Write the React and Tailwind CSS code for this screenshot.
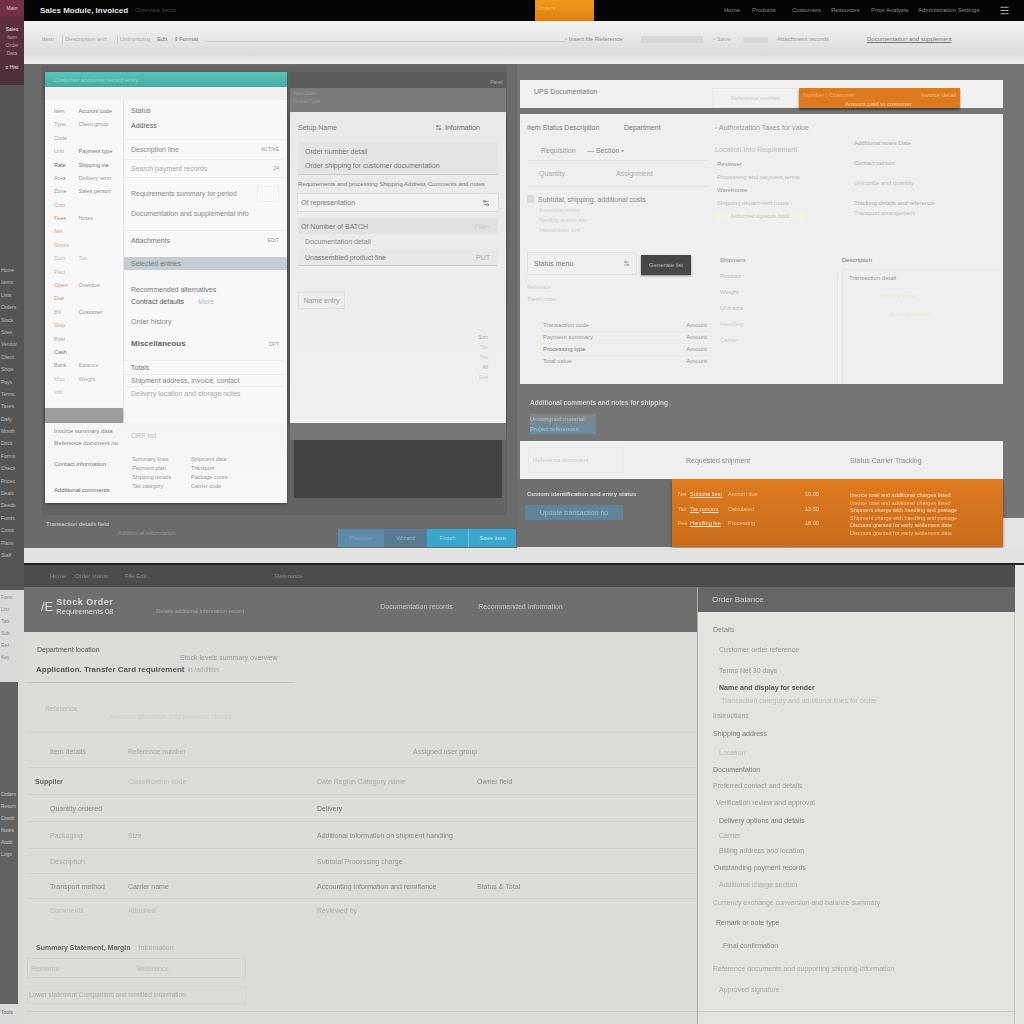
import React from "react";
import { Settings2, Menu } from "lucide-react";

const sideRows = [
  "Home", "Items", "Lists", "Orders", "Stock", "Sites", "Vendor", "Client",
  "Ships", "Pays", "Terms", "Taxes", "Daily", "Month", "Docs", "Forms",
  "Check", "Prices", "Deals", "Deeds", "Funds", "Costs", "Plans", "Staff",
];

const sideBottomRows = ["Orders", "Return", "Credit", "Notes", "Audit", "Logs"];

const cardListRows = [
  ["Item", "text-[#8b8b8b]", "Account code", "text-[#777]"],
  ["Type", "text-[#a5a5a5]", "Client group", "text-[#999]"],
  ["Code", "text-[#a5a5a5]", "", ""],
  ["Unit", "text-[#a5a5a5]", "Payment type", "text-[#777]"],
  ["Rate", "text-[#666]", "Shipping via", "text-[#777]"],
  ["Area", "text-[#999]", "Delivery term", "text-[#999]"],
  ["Zone", "text-[#999]", "Sales person", "text-[#888]"],
  ["Cost", "text-[#c9a78d]", "", ""],
  ["Fees", "text-[#c98d6d]", "Notes", "text-[#999]"],
  ["Net", "text-[#c9a78d]", "", ""],
  ["Gross", "text-[#c9a78d]", "", ""],
  ["Sum", "text-[#bbb]", "Tax", "text-[#bbb]"],
  ["Paid", "text-[#bbb]", "", ""],
  ["Open", "text-[#c98d6d]", "Overdue", "text-[#999]"],
  ["Due", "text-[#c98d6d]", "", ""],
  ["Bill", "text-[#b5b5b5]", "Customer", "text-[#888]"],
  ["Ship", "text-[#c9a78d]", "", ""],
  ["Post", "text-[#c98d6d]", "", ""],
  ["Cash", "text-[#777]", "", ""],
  ["Bank", "text-[#999]", "Balance", "text-[#aaa]"],
  ["Misc", "text-[#bbb]", "Weight", "text-[#aaa]"],
  ["Info", "text-[#bbb]", "", ""],
];

const cardMainRows = [
  { cls: "h-[20px]", text: "Status", tone: "text-[#777]" },
  { cls: "h-[10px]", text: "Address", tone: "text-[#555]" },
  { cls: "mt-[9px] h-[20px] border-t border-[#eee]", text: "Description line", tone: "text-[#888]", tag: "ACTIVE" },
  { cls: "h-[18px] border-t border-[#eee]", text: "Search payment records", tone: "text-[#aaa]", tag: "24" },
  { cls: "h-[32px] border-t border-[#eee]", text: "Requirements summary for period", tone: "text-[#888]", box: true },
  { cls: "h-[8px]", text: "Documentation and supplemental info", tone: "text-[#888]" },
  { cls: "mt-[13px] h-[20px] border-t border-[#eee]", text: "Attachments", tone: "text-[#777]", tag: "EDIT" },
  { cls: "mt-[7px] h-[13px] bg-[#c2ced3] -mr-[2px]", text: "Selected entries", tone: "text-[#777]" },
  { cls: "mt-[12px] h-[14px]", text: "Recommended alternatives", tone: "text-[#777]" },
  { cls: "h-[10px]", text: "Contract defaults", tone: "text-[#555]", link: "More" },
  { cls: "mt-[8px] h-[14px]", text: "Order history", tone: "text-[#888]" },
  { cls: "mt-[8px] h-[16px]", text: "Miscellaneous", tone: "text-[#666] text-[8px] font-bold", tag: "OPT" },
  { cls: "mt-[8px] h-[14px] border-t border-[#eee]", text: "Totals", tone: "text-[#777]" },
  { cls: "h-[12px] border-t border-[#eee]", text: "Shipment address, invoice, contact", tone: "text-[#888]" },
  { cls: "h-[14px] border-t border-[#eee]", text: "Delivery location and storage notes", tone: "text-[#aaa]" },
];

const miniColumn = [
  { head: "Summary lines", head2: "Payment plan", rows: ["Shipping details", "Tax category"] },
  { head: "Shipment data", head2: "Transport", rows: ["Package count", "Carrier code"] },
];

const orangeRows = [
  ["Net", "Subtotal item", "Amount due", "10.00", "Invoice total and additional charges listed"],
  ["Tax", "Tax percent", "Calculated", "12.50", "Shipment charge with handling and postage"],
  ["Fee", "Handling fee", "Processing", "18.00", "Discount granted for early settlement date"],
];

const tableRows = [
  { cls: "h-[31px] mt-[3px]", a: "Item details", aTone: "text-[#999]", b: "Reference number", bTone: "text-[#aaa]", c: "Assigned user group", cTone: "text-[#999] pl-[96px]" },
  { cls: "h-[27px] border-t border-[#d2d2ce]", a: "Supplier", aTone: "text-[#666] font-bold -ml-[15px]", b: "Classification code", bTone: "text-[#bbb]", c: "Date      Region      Category name", cTone: "text-[#aaa]", d: "Owner field" },
  { cls: "h-[27px] border-t border-[#d2d2ce]", a: "Quantity ordered", aTone: "text-[#888]", b: "", bTone: "", c: "Delivery", cTone: "text-[#777]" },
  { cls: "h-[27px] border-t border-[#d2d2ce]", a: "Packaging", aTone: "text-[#aaa]", b: "Size", bTone: "text-[#aaa]", c: "Additional information on shipment handling", cTone: "text-[#888]" },
  { cls: "h-[25px] border-t border-[#d2d2ce]", a: "Description", aTone: "text-[#aaa]", b: "", bTone: "", c: "Subtotal      Processing charge", cTone: "text-[#999]" },
  { cls: "h-[25px] border-t border-[#d2d2ce]", a: "Transport method", aTone: "text-[#888]", b: "Carrier name", bTone: "text-[#888]", c: "Accounting information and remittance", cTone: "text-[#888]", d: "Status & Total" },
  { cls: "h-[24px] border-t border-[#d2d2ce]", a: "Comments", aTone: "text-[#bbb]", b: "Attached", bTone: "text-[#bbb]", c: "Reviewed by", cTone: "text-[#aaa]" },
];

const sideOrderRows = [
  { cls: "h-[19px] pl-[15px]", text: "Details", tone: "text-[#888]" },
  { cls: "h-[21px] pl-[21px]", text: "Customer order reference", tone: "text-[#999]" },
  { cls: "h-[21px] pl-[21px]", text: "Terms          Net 30 days", tone: "text-[#999]" },
  { cls: "h-[13px] pl-[21px]", text: "Name and display for sender", tone: "text-[#555] font-bold" },
  { cls: "h-[12px] pl-[23px]", text: "Transaction category and additional lines for order", tone: "text-[#bbb]" },
  { cls: "h-[18px] pl-[15px]", text: "Instructions", tone: "text-[#999]" },
  { cls: "h-[19px] pl-[15px]", text: "Shipping address", tone: "text-[#777]" },
  { cls: "h-[18px] pl-[21px]", text: "Location", tone: "text-[#bbb]" },
  { cls: "h-[16px] pl-[15px]", text: "Documentation", tone: "text-[#777]" },
  { cls: "h-[16px] pl-[15px]", text: "Preferred contact and details", tone: "text-[#999]" },
  { cls: "h-[19px] pl-[18px]", text: "Verification review and approval", tone: "text-[#999]" },
  { cls: "h-[16px] pl-[21px]", text: "Delivery options and details", tone: "text-[#777]" },
  { cls: "h-[14px] pl-[21px]", text: "Carrier", tone: "text-[#aaa]" },
  { cls: "h-[17px] pl-[21px]", text: "Billing address and location", tone: "text-[#999]" },
  { cls: "h-[17px] pl-[16px]", text: "Outstanding payment records", tone: "text-[#888]" },
  { cls: "h-[17px] pl-[21px]", text: "Additional charge section", tone: "text-[#aaa]" },
  { cls: "h-[19px] pl-[15px]", text: "Currency exchange conversion and balance summary", tone: "text-[#aaa]" },
  { cls: "h-[21px] pl-[18px]", text: "Remark or note type", tone: "text-[#777]" },
  { cls: "h-[24px] pl-[25px]", text: "Final confirmation", tone: "text-[#888]" },
  { cls: "h-[23px] pl-[15px]", text: "Reference documents and supporting shipping information", tone: "text-[#aaa]" },
  { cls: "h-[18px] pl-[21px]", text: "Approved signature", tone: "text-[#aaa]" },
];

function T({ className = "", children }) {
  return <span className={`whitespace-nowrap ${className}`}>{children}</span>;
}

function Sidebar() {
  return (
    <div className="flex w-[24px] shrink-0 flex-col overflow-hidden bg-[#dadada] text-[5px] leading-none text-[#c5c5c5]">
      <div className="flex h-[17px] items-center justify-center bg-[#703047] text-[#e5c9d2]">
        <T>Main</T>
      </div>
      <div className="flex h-[68px] flex-col items-center gap-[3px] bg-[linear-gradient(#5d2f40,#4b3038)] pt-[10px]">
        <T className="text-[#e8e8e8]">Sales</T>
        <T className="text-[#c99aa8]">Item</T>
        <T className="text-[#c99aa8]">Order</T>
        <T className="text-[#c99aa8]">Data</T>
        <T className="mt-[6px] text-[#eee]">≡ Hist</T>
      </div>
      <div className="h-[183px] bg-[#555]" />
      <div className="flex h-[322px] flex-col gap-[7.4px] bg-[#555] pl-[1px]">
        {sideRows.map((row) => (
          <T key={row} className="text-[#bdbdbd]">{row}</T>
        ))}
      </div>
      <div className="flex h-[92px] flex-col gap-[7px] bg-[#dadada] pt-[5px] pl-[1px] text-[#888]">
        <T>Form</T><T>List</T><T>Tab</T><T>Sub</T><T>Ref</T><T>Key</T>
      </div>
      <div className="flex h-[322px] w-[18px] flex-col gap-[7px] bg-[#626262] pt-[110px] pl-[1px]">
        {sideBottomRows.map((row) => (
          <T key={row}>{row}</T>
        ))}
      </div>
      <div className="flex-1 pt-[6px] pl-[1px] text-[#666]">Tools</div>
    </div>
  );
}

function TopBar() {
  return (
    <div className="flex h-[21px] shrink-0 items-center bg-[#050505] text-[6px] text-[#999]">
      <T className="ml-[16px] w-[95px] text-[8px] font-bold text-[#e6e6e6]">Sales Module, Invoiced</T>
      <T className="text-[#444]">Overview items</T>
      <div className="ml-[359px] h-full w-[59px] bg-[linear-gradient(#f09a1e,#e07f10)] pt-[4px] pl-[2px] text-[#f5b75c]">
        <T>Orders</T>
      </div>
      <div className="ml-[130px] flex gap-[12px] text-[#8a8a8a]">
        <T className="w-[16px]">Home</T>
        <T className="w-[28px]">Products</T>
        <T className="w-[27px]">Customers</T>
        <T className="w-[28px]">Resources</T>
        <T className="w-[35px]">Price Analysis</T>
        <T className="w-[65px]">Administration Settings</T>
      </div>
      <Menu size={11} className="ml-[16px] text-[#bbb]" />
    </div>
  );
}

function Toolbar() {
  return (
    <div className="flex h-[43px] shrink-0 items-center bg-[linear-gradient(#f2f2f2,#e6e6e6_45%,#dcdcdc_75%,#ededed)] pb-[6px] text-[6px] text-[#aaa]">
      <T className="ml-[18px] w-[20px] text-[#999]">Item</T>
      <T className="w-[55px] border-l border-[#ccc] pl-[2px]">Description text</T>
      <T className="w-[40px] border-l border-[#ccc] pl-[2px]">Unit pricing</T>
      <T className="w-[18px] text-[#777]">Edit</T>
      <T className="w-[30px] text-[#777]">‖ Format</T>
      <div className="mt-[3px] h-[1px] w-[360px] bg-[#cfcfcf]" />
      <T className="w-[76px] text-[#888]">▫ Insert file  Reference</T>
      <div className="mr-[10px] h-[7px] w-[62px] bg-[#d8d8d8]" />
      <T className="w-[30px]">▫ Save</T>
      <div className="mr-[9px] h-[6px] w-[25px] bg-[#d8d8d8]" />
      <T className="w-[90px] text-[#999]">Attachment records</T>
      <T className="text-[#777] underline">Documentation and supplement</T>
    </div>
  );
}

function ListCard() {
  return (
    <div className="flex h-[431px] w-[242px] flex-col bg-[#f8f8f8] shadow-[0_1px_3px_rgba(0,0,0,0.4)]">
      <div className="h-[15px] shrink-0 bg-[linear-gradient(#5ec2b8,#43aba6)] pt-[4px] pl-[8px] text-[6px] text-[#8fd8d0]">
        <T>Customer accounts record entry</T>
      </div>
      <div className="h-[13px] shrink-0 bg-[#f0f0f0]" />
      <div className="flex h-[323px] shrink-0">
        <div className="flex w-[79px] shrink-0 flex-col border-r border-[#e6e6e6]">
          <div className="flex flex-1 flex-col overflow-hidden pt-[5px] pr-[5px] pl-[9px] text-[5.5px] leading-none">
            {cardListRows.map(([left, leftTone, right, rightTone], i) => (
              <div key={left + i} className="flex h-[13.4px] shrink-0 items-center">
                <T className={`w-[25px] ${leftTone}`}>{left}</T>
                <T className={`w-[40px] ${rightTone}`}>{right}</T>
              </div>
            ))}
          </div>
          <div className="h-[15px] shrink-0 bg-[#9d9d9d] shadow-[0_1px_2px_rgba(0,0,0,0.3)]" />
        </div>
        <div className="min-w-0 flex-1 pr-[2px] text-[7px] leading-none">
          {cardMainRows.map((row) => (
            <div key={row.text} className={`flex items-center justify-between pr-[6px] pl-[7px] ${row.cls}`}>
              <T className={row.tone}>{row.text}</T>
              {row.link && <T className="mr-auto ml-[14px] text-[#a8b8d8]">{row.link}</T>}
              {row.tag && <T className="text-[5px] text-[#999]">{row.tag}</T>}
              {row.box && <div className="h-[16px] w-[22px] border border-[#eee]" />}
            </div>
          ))}
        </div>
      </div>
      <div className="flex flex-1 bg-[linear-gradient(#f4f4f4,#f8f8f8)]">
        <div className="flex w-[79px] shrink-0 flex-col pl-[9px] text-[6px] leading-none text-[#888]">
          <T className="mt-[5px]">Invoice summary data</T>
          <T className="mt-[6px]">Reference document no</T>
          <T className="mt-[15px] text-[#777]">Contact information</T>
          <T className="mt-[20px] text-[#666]">Additional comments</T>
        </div>
        <div className="flex flex-col">
          <T className="mt-[9px] ml-[7px] text-[7px] leading-none text-[#bbb]">CRP list</T>
        </div>
        <div className="-ml-[28px] flex flex-1 gap-[20px] pt-[32px] pl-[4px] text-[5.5px] leading-[9px] text-[#999]">
          {miniColumn.map((col) => (
            <div key={col.head} className="flex flex-col">
              <T>{col.head}</T>
              <T>{col.head2}</T>
              {col.rows.map((r) => (
                <T key={r}>{r}</T>
              ))}
            </div>
          ))}
        </div>
      </div>
    </div>
  );
}

function DetailCard() {
  return (
    <div className="flex w-[216px] flex-col">
      <div className="flex h-[16px] shrink-0 items-start justify-end bg-[#5b5b5b] pt-[8px] pr-[3px] text-[5px] leading-none text-[#aaa]">
        <T>Panel</T>
      </div>
      <div className="flex h-[24px] shrink-0 flex-col gap-[3px] bg-[#7b7b7b] pt-[3px] pl-[4px] text-[5px] leading-none text-[#999]">
        <T>Item    Code</T>
        <T>Group   Type</T>
      </div>
      <div className="flex h-[311px] shrink-0 flex-col bg-[linear-gradient(#e9e9e9,#f0f0f0)] px-[8px] text-[7px] leading-none shadow-[0_2px_3px_rgba(0,0,0,0.4)]">
        <div className="flex h-[30px] shrink-0 items-center justify-between pr-[18px]">
          <T className="text-[#777]">Setup Name</T>
          <span className="flex items-center gap-[3px]">
            <Settings2 size={7} className="text-[#666]" />
            <T className="text-[#666]">Information</T>
          </span>
        </div>
        <div className="flex h-[32px] shrink-0 flex-col justify-center gap-[7px] bg-[#e4e4e4] pl-[7px] shadow-[0_1px_0_#ccc]">
          <T className="text-[#777]">Order number detail</T>
          <T className="text-[#777]">Order shipping for customer documentation</T>
        </div>
        <div className="flex h-[20px] shrink-0 items-center">
          <T className="text-[6px] text-[#777]">Requirements and processing  Shipping  Address  Comments and notes</T>
        </div>
        <div className="flex h-[17px] shrink-0 items-center justify-between bg-[#f2f2f2] pr-[8px] pl-[3px] shadow-[0_0_0_1px_#ddd]">
          <T className="text-[#777]">Of representation</T>
          <Settings2 size={8} className="text-[#666]" />
        </div>
        <div className="mt-[7px] flex h-[16px] shrink-0 items-center justify-between bg-[#e2e2e2] pr-[8px] pl-[3px]">
          <T className="text-[#777]">Of  Number of BATCH</T>
          <T className="text-[#ccc]">Filter</T>
        </div>
        <div className="flex h-[15px] shrink-0 items-center pl-[7px] shadow-[0_1px_0_#ccc]">
          <T className="text-[#888]">Documentation  detail</T>
        </div>
        <div className="flex h-[16px] shrink-0 items-center justify-between bg-[#e8e8e8] pr-[8px] pl-[7px] shadow-[0_1px_0_#ccc]">
          <T className="text-[#777]">Unassembled product line</T>
          <T className="text-[#aaa]">PUT</T>
        </div>
        <div className="mt-[27px] flex h-[17px] w-[47px] shrink-0 items-center justify-center border border-[#e0e0e0]">
          <T className="text-[#999]">Name entry</T>
        </div>
        <div className="mt-[26px] ml-auto flex flex-col items-end gap-[5px] pr-[10px] text-[5px] text-[#ccc]">
          <T className="text-[#aaa]">Sum</T>
          <T>Tax</T>
          <T>Net</T>
          <T className="text-[#aaa]">All</T>
          <T>End</T>
        </div>
      </div>
      <div className="h-[17px] shrink-0 bg-[#777]" />
      <div className="mx-[4px] h-[58px] shrink-0 bg-[#424242]" />
    </div>
  );
}

function LeftPanel() {
  return (
    <div className="flex w-[493px] shrink-0 flex-col bg-[#6b6b6b] pl-[18px]">
      <div className="mt-[2px] flex h-[449px] w-[465px] gap-[3px] bg-[#636363] pt-[6px] pl-[3px]">
        <ListCard />
        <DetailCard />
      </div>
      <div className="flex h-[33px] items-start pt-[6px] pl-[4px]">
        <div className="flex w-[292px] flex-col gap-[3px] text-[6px] leading-none">
          <T className="text-[#d5d5d5]">Transaction details field</T>
          <T className="ml-[72px] text-[#999]">Additional  information</T>
        </div>
        <div className="mt-[8px] flex h-[18px] text-[6px] leading-[18px]">
          <div className="w-[46px] bg-[#5f8bab] text-center text-[#7ca6c5]">Previous</div>
          <div className="w-[43px] bg-[#587a93] text-center text-[#8fb6d0]">Wizard</div>
          <div className="w-[41px] bg-[#3aa5cd] text-center text-[#a0dcf0]">Finish</div>
          <div className="w-[48px] border-l border-[#6cc2e0] bg-[#3aa5cd] text-center text-[#c0ecf8]">Save item</div>
        </div>
      </div>
    </div>
  );
}

function RightPanel() {
  return (
    <div className="flex min-w-0 flex-1 flex-col bg-[linear-gradient(#757575_454px,#e4e4e4_454px)] pt-[16px] pr-[21px] pl-[3px] text-[7px] leading-none">
      <div className="flex h-[28px] shrink-0 bg-[#f1f1f1]">
        <T className="mt-[8px] ml-[14px] w-[178px] text-[#777]">UPS Documentation</T>
        <div className="mt-[8px] flex h-[20px] w-[87px] items-center justify-center border border-[#e8e8e8]">
          <T className="text-[6px] text-[#ccc]">Reference number</T>
        </div>
        <div className="mt-[8px] flex h-[20px] w-[161px] justify-between bg-[#dd7a1f] px-[4px] pt-[4px] text-[6px] shadow-[0_2px_2px_rgba(0,0,0,0.45)]">
          <div className="flex flex-col gap-[3px]">
            <T className="text-[#f1b27a]">Number  |  Customer</T>
            <T className="ml-[42px] text-[#f8d2ad]">Amount paid to customer</T>
          </div>
          <T className="text-[#f3bf8d]">Invoice detail</T>
        </div>
      </div>

      <div className="mt-[6px] flex h-[270px] shrink-0 flex-col overflow-hidden bg-[#efefef]">
        <div className="flex h-[135px] shrink-0">
          <div className="flex w-[194px] shrink-0 flex-col px-[7px]">
            <div className="flex h-[26px] items-center">
              <T className="w-[97px] text-[#777]">Item Status Description</T>
              <T className="text-[#777]">Department</T>
            </div>
            <div className="flex h-[21px] items-center border-b border-[#e2e2e2] pl-[14px] text-[#999]">
              <T className="w-[46px]">Requisition</T>
              <T className="text-[#888]">—  Section  ▪</T>
            </div>
            <div className="flex h-[26px] items-center border-b border-[#e2e2e2] pl-[12px] text-[#aaa]">
              <T className="w-[77px]">Quantity</T>
              <T>Assignment</T>
            </div>
            <div className="flex h-[16px] items-end">
              <span className="mr-[4px] h-[8px] w-[7px] bg-[#ddd]" />
              <T className="text-[#888]">Subtotal, shipping, additional costs</T>
            </div>
            <div className="mt-[5px] flex flex-col gap-[5px] pl-[12px] text-[5px] text-[#d0d0d0]">
              <T>Processing entries</T>
              <T>Handling amount due</T>
              <T>Internal notes sent</T>
            </div>
          </div>
          <div className="flex w-[140px] shrink-0 flex-col pl-[1px]">
            <div className="flex h-[26px] items-center">
              <T className="text-[#999]">▫ Authorization   Taxes for value</T>
            </div>
            <div className="flex h-[18px] items-center text-[#bbb]">
              <T>Location  Info  Requirement</T>
            </div>
            <div className="flex flex-col gap-[7px] pt-[3px] pl-[2px] text-[6px] text-[#bbb]">
              <T className="text-[#999]">Reviewer</T>
              <T>Processing and payment terms</T>
              <T className="text-[#999]">Warehouse</T>
              <T>Shipping department notes</T>
            </div>
            <div className="mt-[6px] w-[90px] bg-[#f3f2e6] py-[2px] text-center text-[5px] text-[#c5c5b0]">
              <T>Authorized signature block</T>
            </div>
          </div>
          <div className="flex flex-1 flex-col text-[6px] text-[#bbb]">
            <div className="h-[26px]" />
            <T className="text-[#aaa]">Additional notes       Date</T>
            <T className="mt-[14px] text-[#aaa]">Contact person</T>
            <T className="mt-[14px]">Unit price and quantity</T>
            <T className="mt-[14px] text-[#aaa]">Tracking details and reference</T>
            <T className="mt-[4px]">Transport arrangement</T>
          </div>
        </div>

        <div className="flex h-[135px] shrink-0 pr-[4px]">
          <div className="flex w-[194px] shrink-0 flex-col px-[7px]">
            <div className="flex h-[26px] shrink-0 items-end">
              <div className="flex h-[23px] w-[110px] items-center justify-between border border-[#e0e0e0] px-[6px]">
                <T className="text-[#777]">Status menu</T>
                <Settings2 size={7} className="text-[#888]" />
              </div>
              <div className="ml-[4px] flex h-[20px] w-[50px] items-center justify-center bg-[#474747] shadow-[0_1px_2px_rgba(0,0,0,0.4)]">
                <T className="text-[6px] text-[#bbb]">Generate list</T>
              </div>
            </div>
            <div className="mt-[10px] flex flex-col gap-[7px] text-[5px] text-[#ccc]">
              <T>Reference</T>
              <T>Transit notes</T>
            </div>
            <div className="mt-[20px] flex flex-col gap-[2px] pl-[16px] text-[6px] text-[#999]">
              {["Transaction code", "Payment summary", "Processing type", "Total value"].map((t, i) => (
                <div key={t} className="flex justify-between border-b border-[#e8e8e8] pb-[3px] last:border-0">
                  <T className={i === 2 ? "text-[#777]" : ""}>{t}</T>
                  <T>Amount</T>
                </div>
              ))}
            </div>
          </div>
          <div className="flex w-[124px] shrink-0 flex-col pt-[8px] pl-[6px] text-[6px] text-[#bbb]">
            <T className="text-[#888]">Shipment</T>
            <div className="mt-[10px] flex flex-1 flex-col gap-[10px] border-r border-[#e4e4e4]">
              <T>Product</T>
              <T>Weight</T>
              <T>Unit size</T>
              <T className="text-[#ccc]">Handling</T>
              <T className="text-[#ccc]">Carrier</T>
            </div>
          </div>
          <div className="ml-[4px] flex flex-1 flex-col pt-[8px] text-[6px] text-[#bbb]">
            <T className="text-[#777]">Description</T>
            <div className="mt-[6px] flex flex-1 flex-col gap-[12px] border-t border-l border-[#e6e6e6] pt-[5px] pl-[6px]">
              <T className="text-[#999]">Transaction detail</T>
              <T className="ml-[30px] text-[#e6e6cc]">Balance sheet</T>
              <T className="ml-[40px] text-[#e6e6cc]">Account review</T>
            </div>
          </div>
        </div>
      </div>

      <div className="flex h-[57px] shrink-0 flex-col pt-[16px] pl-[10px]">
        <T className="text-[6.5px] font-bold text-[#d0d0d0]">Additional comments and notes for shipping</T>
        <div className="mt-[7px] w-[66px] text-[6px] text-[#a8c4d4]">
          <div className="flex h-[10px] items-center bg-[#7f8588]"><T>Unassigned material</T></div>
          <div className="flex h-[10px] items-center bg-[#6e8b9d]"><T>Project references</T></div>
        </div>
      </div>

      <div className="flex h-[38px] shrink-0 items-center bg-[#efefef]">
        <div className="ml-[8px] flex h-[26px] w-[96px] items-center border border-[#e6e6e6] pl-[4px] text-[6px] text-[#ccc]">
          <T>Reference document</T>
        </div>
        <T className="ml-[62px] w-[164px] text-[#888]">Requested shipment</T>
        <T className="text-[#888]">Status  Carrier  Tracking</T>
      </div>

      <div className="-ml-[3px] flex h-[68px] shrink-0">
        <div className="flex w-[155px] shrink-0 flex-col bg-[#6f6f6f] pt-[12px] pl-[10px]">
          <T className="text-[6px] font-bold text-[#ddd]">Custom identification and entry status</T>
          <div className="mt-[8px] -ml-[2px] flex h-[15px] w-[98px] items-center justify-center bg-[#60859b]">
            <T className="text-[#98c0d5]">Update transaction no</T>
          </div>
        </div>
        <div className="flex flex-1 bg-[linear-gradient(#df7a1f,#c96c1c)] pt-[13px] pl-[6px] text-[5.5px] text-[#f6c79b] shadow-[0_2px_3px_rgba(0,0,0,0.4)]">
          <div className="flex w-[156px] flex-col gap-[9px]">
            {orangeRows.map(([a, b, c, d]) => (
              <div key={a} className="flex items-center">
                <T className="w-[12px]">{a}</T>
                <T className="w-[38px] text-[#fbe3cb] underline">{b}</T>
                <T className="w-[77px]">{c}</T>
                <T className="text-[#fbe3cb]">{d}</T>
              </div>
            ))}
          </div>
          <div className="ml-[16px] flex flex-col gap-[2px] pt-[1px]">
            {orangeRows.map(([a, , , , e]) => (
              <React.Fragment key={a}>
                <T className="text-[#fbe3cb]">{e}</T>
                <T className="text-[#f6c79b]">{e}</T>
              </React.Fragment>
            ))}
          </div>
        </div>
      </div>
    </div>
  );
}

function OrderForm() {
  return (
    <div className="flex w-[673px] shrink-0 flex-col bg-[#dddcd8] pl-[3px] text-[7px] leading-none">
      <div className="-ml-[3px] flex h-[45px] shrink-0 items-center bg-[#6f6f6f] pb-[6px] pl-[17px]">
        <T className="text-[13px] leading-[14px] font-light text-[#ddd]">/E</T>
        <div className="ml-[3px] flex w-[100px] flex-col gap-[1px] text-[#ddd]">
          <T className="text-[9px] font-bold tracking-[0.5px]">Stock Order</T>
          <T className="text-[7.5px]">Requirements  08</T>
        </div>
        <T className="mt-[10px] w-[224px] text-[5.5px] text-[#a5a5a5]">Details  additional information record</T>
        <T className="w-[98px] text-[#c8c8c8]">Documentation records</T>
        <T className="text-[#c8c8c8]">Recommended Information</T>
      </div>

      <div className="flex h-[26px] shrink-0 flex-col pt-[14px] pl-[10px]">
        <T className="text-[#555]">Department location</T>
        <T className="mt-[1px] ml-[143px] text-[#999]">Stock levels summary overview</T>
      </div>
      <div className="flex h-[25px] w-[268px] shrink-0 items-center border-b border-[#c5c5c1] pl-[9px] text-[8px]">
        <T className="font-bold text-[#555]">Application. Transfer Card requirement</T>
        <T className="ml-[3px] text-[6.5px] text-[#aaa]">in  /addition</T>
      </div>

      <div className="flex h-[50px] shrink-0 flex-col border-b border-[#d5d5d1] pt-[22px] pl-[18px] text-[#b5b5b5]">
        <T>Reference</T>
        <T className="mt-[1px] ml-[65px] text-[#ccc]">Account allocation and payment history</T>
      </div>

      {tableRows.map((row) => (
        <div key={row.a} className={`grid shrink-0 grid-cols-[78px_189px_1fr] items-center pl-[23px] ${row.cls}`}>
          <T className={row.aTone}>{row.a}</T>
          <T className={row.bTone}>{row.b}</T>
          <span className="flex items-center">
            <T className={`w-[160px] ${row.cTone}`}>{row.c}</T>
            {row.d && <T className="text-[#888]">{row.d}</T>}
          </span>
        </div>
      ))}

      <div className="mt-[18px] flex h-[14px] shrink-0 items-center pl-[9px]">
        <T className="font-bold text-[#666]">Summary Statement, Margin</T>
        <T className="ml-[8px] text-[#aaa]">Information</T>
      </div>
      <div className="mt-[4px] flex h-[20px] w-[219px] shrink-0 items-center gap-[78px] border border-[#cfcfcb] pl-[3px] text-[#bbb]">
        <T>Remarks</T>
        <T>Reference</T>
      </div>
      <div className="mt-[8px] flex h-[18px] w-[219px] shrink-0 items-center border border-[#d5d5d1] pl-[1px] text-[6.5px] text-[#aaa]">
        <T>Lower statement Comparison and remitted information</T>
      </div>
      <div className="mt-[7px] border-t border-[#ccc]" />
    </div>
  );
}

function OrderSide() {
  return (
    <div className="flex w-[318px] shrink-0 flex-col border-l border-[#aaa] bg-[#e3e3df] text-[7px] leading-none">
      <div className="flex h-[25px] shrink-0 items-center bg-[#666] pl-[14px]">
        <T className="text-[8px] text-[#d5d5d5]">Order Balance</T>
      </div>
      <div className="flex-1 overflow-hidden border-r border-[#c5c5c1] pt-[8px]">
        {sideOrderRows.map((row) => (
          <div key={row.text} className={`flex items-center ${row.cls}`}>
            <T className={row.tone}>{row.text}</T>
          </div>
        ))}
        <div className="mt-[13px] border-t border-[#ccc]" />
      </div>
    </div>
  );
}

export default function App() {
  return (
    <div className="h-[1024px] w-[1024px] overflow-hidden bg-[#e4e4e4] font-['Liberation_Sans',sans-serif]">
      <div className="flex h-full blur-[0.6px]">
        <Sidebar />
        <div className="flex min-w-0 flex-1 flex-col">
          <TopBar />
          <Toolbar />
          <div className="flex h-[484px] shrink-0">
            <LeftPanel />
            <RightPanel />
          </div>
          <div className="h-[17px] shrink-0 border-b-2 border-[#222] bg-[#e2e2e2]" />
          <div className="flex min-h-0 flex-1 flex-col pr-[9px]">
            <div className="flex h-[22px] shrink-0 items-center bg-[#4c4c4c] pl-[26px] text-[6px] text-[#8a8a8a]">
              <T className="w-[25px]">Home</T>
              <T className="w-[50px]">Order status</T>
              <T className="w-[150px]">File  Edit</T>
              <T>Reference</T>
            </div>
            <div className="flex min-h-0 flex-1">
              <OrderForm />
              <OrderSide />
            </div>
          </div>
        </div>
      </div>
    </div>
  );
}
